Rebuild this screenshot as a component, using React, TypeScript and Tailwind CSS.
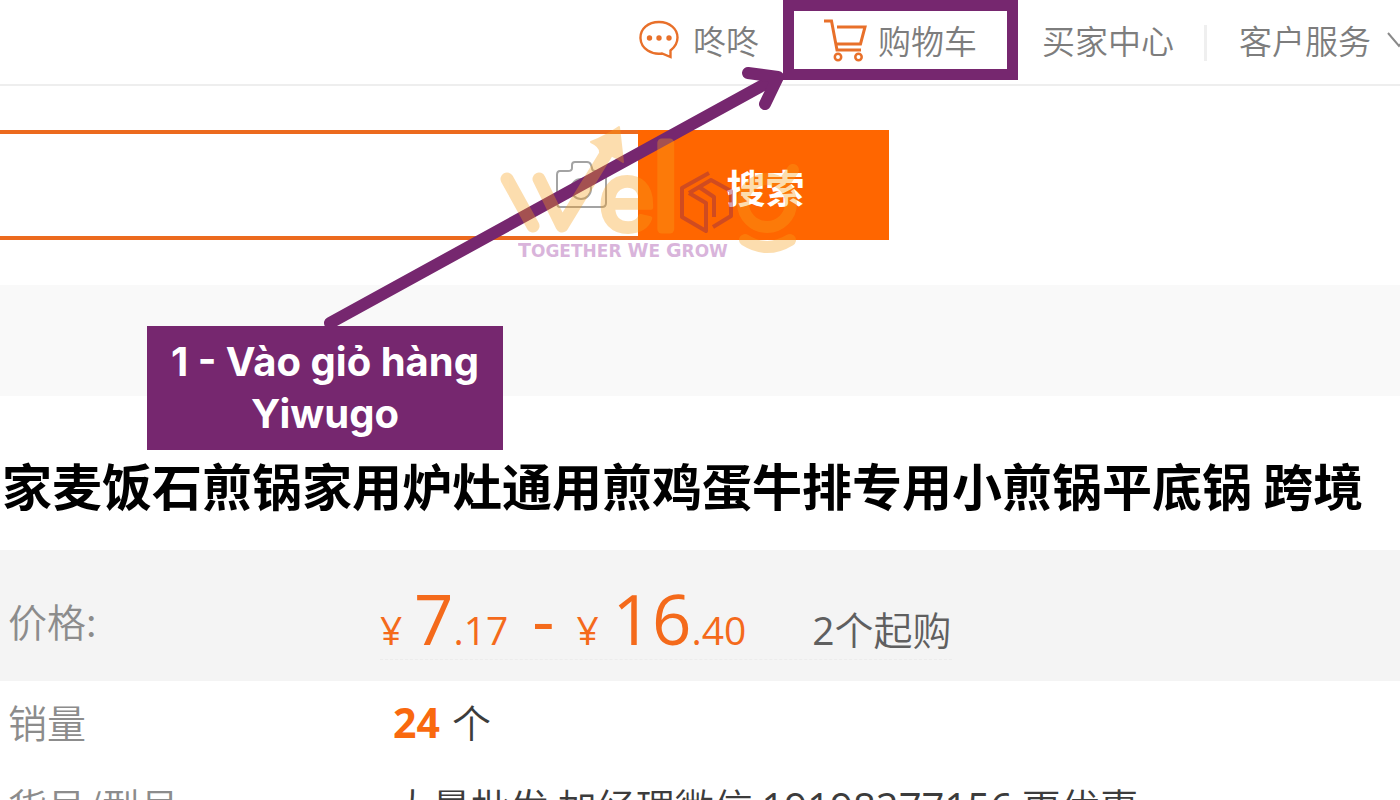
import React from "react";

function ChatIcon() {
  return (
    <svg className="h-10 w-10 shrink-0" viewBox="0 0 40 40" fill="none" stroke="#e8702a" strokeWidth="2.400" strokeLinejoin="miter">
      <path d="M23 33.500C13 35 2 29 1.500 18.500C1 9 9 2 20 2S38.500 9 38.500 17.500C38.500 23 36 27 31.500 30.500V37Z" />
      <g fill="#e8702a" stroke="none">
        <circle cx="10.500" cy="18" r="2.700" />
        <circle cx="20" cy="18" r="2.700" />
        <circle cx="30" cy="18" r="2.700" />
      </g>
    </svg>
  );
}

function CartIcon() {
  return (
    <svg className="h-11 w-11 shrink-0" viewBox="0 0 44 44" fill="none" stroke="#e8702a" strokeWidth="3">
      <path d="M0 3H7.500L13 32H37" />
      <path d="M13 9H41L36.500 26H12.500" />
      <circle cx="14" cy="39" r="3.200" strokeWidth="2.500" />
      <circle cx="34.500" cy="39" r="3.200" strokeWidth="2.500" />
    </svg>
  );
}

function CameraIcon() {
  return (
    <svg className="h-12 w-[52px]" viewBox="0 0 52 48" fill="none" stroke="#a3a3a3" strokeWidth="2">
      <path d="M5 10H13Q17 10 17 7V4Q17 1 20 1H32Q35 1 36 4L37 7Q37 10 40 10H47Q51 10 51 14V42Q51 46 47 46H5Q2 46 2 42V14Q2 10 5 10Z" />
      <circle cx="26" cy="28" r="10" />
    </svg>
  );
}

function Watermark() {
  return (
    <svg
      className="pointer-events-none absolute left-[490px] top-[110px] h-[160px] w-[330px]"
      viewBox="0 0 330 160"
      aria-hidden="true"
    >
      <g opacity="0.35" fill="#f9a01b" stroke="#f9a01b">
        <g fill="none" strokeWidth="13" strokeLinecap="round" strokeLinejoin="round">
          <path d="M17 69L43 116M49 69L72 116L116 44" />
        </g>
        <path d="M101 32Q116 26 129 17L133 52Q122 44 110 42Q110 36 101 32Z" strokeWidth="2" strokeLinejoin="round" />
        <g fontFamily="Inter, sans-serif" strokeLinejoin="round">
          <text x="108" y="121" fontSize="98" fontWeight="500" strokeWidth="4">e</text>
          <text x="162" y="119" fontSize="118" fontWeight="300" strokeWidth="9">l</text>
        </g>
        <g fill="none" strokeWidth="12" strokeLinecap="round">
          <circle cx="277" cy="93" r="24" />
          <path d="M294 73L303 60" />
          <path d="M255 130Q277 144 300 130" />
        </g>
      </g>
      <g opacity="0.45" fill="none" stroke="#982c48" strokeWidth="4" strokeLinejoin="round">
        <path d="M219 63L192 78V107L216 121V93L199 83" />
        <path d="M199 83L221 70L241 81V106L223 117" />
        <path d="M209 77L224 87V107" />
      </g>
      <text
        x="28"
        y="147"
        fill="#a64fab"
        opacity="0.42"
        fontFamily="'DejaVu Sans', sans-serif"
        fontWeight="700"
        fontSize="17"
      >
        <tspan fontSize="19">T</tspan>OGETHER <tspan fontSize="19">W</tspan>E <tspan fontSize="19">G</tspan>ROW
      </text>
    </svg>
  );
}

function ArrowAnnotation() {
  return (
    <svg
      className="pointer-events-none absolute left-[320px] top-[60px] h-[270px] w-[470px]"
      viewBox="0 0 470 270"
      fill="none"
      stroke="#76276f"
      strokeWidth="12"
      strokeLinecap="round"
      strokeLinejoin="round"
      aria-hidden="true"
    >
      <path d="M10 263L456 18" />
      <path d="M428 13L458 17L445 44" />
    </svg>
  );
}

export default function App() {
  return (
    <div
      lang="zh-CN"
      className="relative h-screen overflow-hidden bg-white font-['Noto_Sans_CJK_SC',sans-serif] text-[39px] font-[350] leading-[48px] text-[#3c3c3c]"
    >
      <header className="border-b-2 border-[#eeeeee]">
        <nav className="flex h-[84px] items-start whitespace-nowrap pl-[639px] text-[33px] text-[#7d7d7d]">
          <a href="#chat" className="flex h-20 shrink-0 items-center gap-[14px]">
            <ChatIcon />
            咚咚
          </a>
          <a
            href="#cart"
            className="ml-6 flex h-20 w-[235px] shrink-0 items-center gap-[10px] border-[11px] border-[#76276f] pl-[30px]"
          >
            <CartIcon />
            购物车
          </a>
          <a href="#buyer" className="ml-6 flex h-20 shrink-0 items-center">
            买家中心
          </a>
          <span className="ml-[30px] mt-[25px] h-9 w-[3px] shrink-0 bg-[#efefef]" />
          <a href="#service" className="ml-8 flex h-20 shrink-0 items-center gap-4">
            客户服务
            <svg className="h-4 w-6" viewBox="0 0 24 16" fill="none" stroke="#8a8a8a" strokeWidth="2">
              <path d="M1 1L12 14L23 1" />
            </svg>
          </a>
        </nav>
      </header>

      <form className="flex pb-[45px] pt-11" onSubmit={(e) => e.preventDefault()}>
        <div className="flex h-[110px] w-[638px] items-center border-y-4 border-[#ec6a1e] pr-[31px]">
          <input aria-label="搜索商品" className="h-full min-w-0 flex-1 bg-transparent px-4 outline-none" />
          <button type="button" aria-label="图片搜索">
            <CameraIcon />
          </button>
        </div>
        <button type="submit" className="h-[110px] w-[251px] bg-[#ff6600] pl-1 pt-0.5 font-bold text-white">
          搜索
        </button>
      </form>

      <div className="h-[111px] bg-[#f9f9f9]" />

      <main>
        <h1 className="-ml-12 whitespace-nowrap pb-[30px] pt-[52px] text-[50px] font-bold leading-[72px] text-black">
          厂家麦饭石煎锅家用炉灶通用煎鸡蛋牛排专用小煎锅平底锅 跨境
        </h1>

        <dl>
          <div className="flex h-[131px] bg-[#f4f4f4] pl-2">
            <dt className="w-[372px] shrink-0 pt-[46px] text-[#8c8c8c]">价格:</dt>
            <dd className="flex h-[110px] items-baseline whitespace-pre border-b border-dashed border-[#ececec] pt-6 font-['Open_Sans',sans-serif] text-[39px] font-normal leading-[88px] text-[#f46a1b]">
              <span className="w-[34px]">¥</span>
              <span className="text-[69px]">7</span>
              <span>.17</span>
              <span className="ml-6 text-[69px]">-</span>
              <span className="ml-[22px] w-[36px]">¥</span>
              <span className="text-[69px]">16</span>
              <span>.40</span>
              <span className="ml-[66px] text-[#5f5f5f]">
                2<span className="font-['Noto_Sans_CJK_SC',sans-serif] font-[350]">个起购</span>
              </span>
            </dd>
          </div>
          <div className="flex pl-2 pt-4">
            <dt className="w-[385px] shrink-0 text-[#8c8c8c]">销量</dt>
            <dd className="flex items-baseline gap-3">
              <b className="font-['Open_Sans',sans-serif] text-[41px] font-bold text-[#f9690e]">24</b>个
            </dd>
          </div>
          <div className="flex whitespace-nowrap pl-2 pt-[35px]">
            <dt className="w-[385px] shrink-0 text-[#8c8c8c]">货号/型号</dt>
            <dd>
              大量批发 加经理微信{" "}
              <span className="font-['Open_Sans',sans-serif] text-[40px] font-normal">19198277156</span> 更优惠
            </dd>
          </div>
        </dl>
      </main>

      <ArrowAnnotation />
      <Watermark />
      <p
        lang="vi"
        className="absolute left-[147px] top-[326px] w-[356px] bg-[#76276f] px-2 py-[10px] text-center font-['Inter',sans-serif] text-[40px] font-bold leading-[52px] text-white"
      >
        1 - Vào giỏ hàng Yiwugo
      </p>
    </div>
  );
}
